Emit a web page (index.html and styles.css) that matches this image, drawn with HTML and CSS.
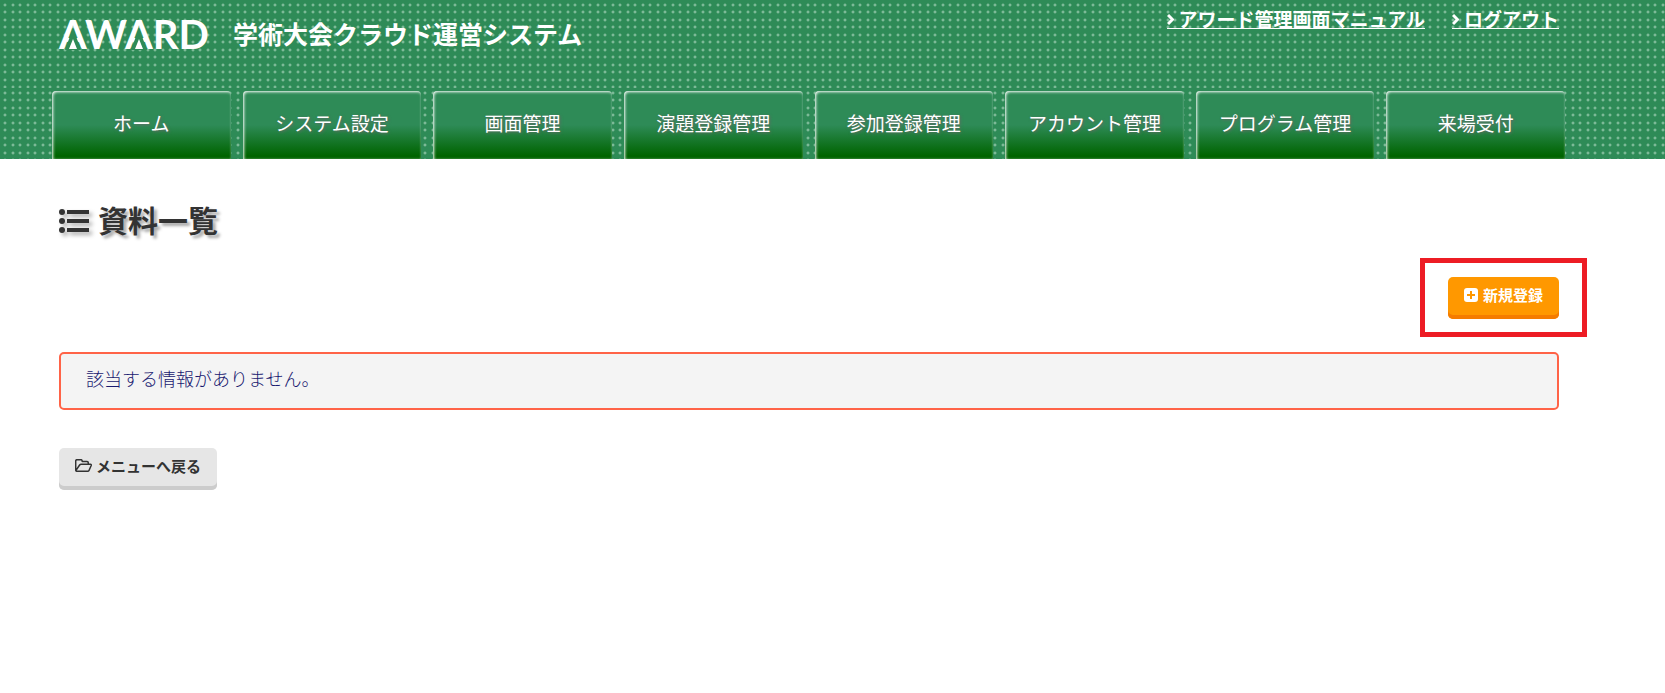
FILE: index.html
```html
<!DOCTYPE html>
<html lang="ja">
<head>
  <meta charset="UTF-8">
  <meta name="viewport" content="width=device-width, initial-scale=1.0">
  <title>資料一覧</title>
  <link rel="stylesheet" href="styles.css">
</head>
<body>
  <header class="header">
    <div class="header-inner">
      <a class="brand" href="#">
        <svg class="logo" width="156" height="40" viewBox="0 0 156 40" role="img" aria-label="AWARD">
          <text class="logo-text" x="0" y="36">AWARD</text>
          <path class="logo-gap" d="M14 15 L22 37 H6 Z M80 15 L88 37 H72 Z"/>
          <path class="logo-mark" d="M14 26 L18 36 H10 Z M80 26 L84 36 H76 Z"/>
        </svg>
        <span class="brand-name">学術大会クラウド運営システム</span>
      </a>
      <div class="header-links">
        <a href="#"><svg width="7" height="14" viewBox="0 0 7 14"><path d="M1 3l4.500 4.500L1 12"/></svg>アワード管理画面マニュアル</a>
        <a href="#"><svg width="7" height="14" viewBox="0 0 7 14"><path d="M1 3l4.500 4.500L1 12"/></svg>ログアウト</a>
      </div>
    </div>
  </header>

  <nav class="nav">
    <ul class="nav-list">
      <li><a href="#">ホーム</a></li>
      <li><a href="#">システム設定</a></li>
      <li><a href="#">画面管理</a></li>
      <li><a href="#">演題登録管理</a></li>
      <li><a href="#">参加登録管理</a></li>
      <li><a href="#">アカウント管理</a></li>
      <li><a href="#">プログラム管理</a></li>
      <li><a href="#">来場受付</a></li>
    </ul>
  </nav>

  <main class="main">
    <h1 class="title">
      <svg width="31" height="30" viewBox="0 0 31 30">
        <circle cx="3" cy="8" r="3"/><circle cx="3" cy="17" r="3"/><circle cx="3" cy="26" r="3"/>
        <rect x="8" y="6" width="22" height="4"/><rect x="8" y="15" width="22" height="4"/><rect x="8" y="24" width="22" height="4"/>
      </svg>
      資料一覧
    </h1>

    <div class="actions">
      <div class="marked">
        <button type="button" class="btn btn-new">
          <svg width="15" height="15" viewBox="0 0 15 15">
            <rect y="1" width="14" height="14" rx="3" fill="#fff"/>
            <path d="M7 4v8M3 8h8" stroke="#ff9800" stroke-width="2"/>
          </svg>
          新規登録
        </button>
      </div>
    </div>

    <p class="message">該当する情報がありません。</p>

    <button type="button" class="btn btn-back">
      <svg width="17" height="13" viewBox="0 0 17 13" fill="none" stroke="#333" stroke-width="1.500" stroke-linejoin="round">
        <path d="M13.300 5V3.800Q13.300 2.600 12 2.600H7.200V2Q7.200.7 6 .7H2Q.7.7.7 2V11Q.7 12.300 2 12.300H12.500Q13.300 12.300 14 11.500L16.200 6.500Q16.500 5.200 15.500 5.200H6.200Q5.200 5.200 4.600 6L1 11.300"/>
      </svg>
      メニューへ戻る
    </button>
  </main>
</body>
</html>
```

FILE: styles.css
```css
* {
  box-sizing: border-box;
}
body {
  margin: 0;
  background: #fff;
  color: #333;
  font-family: "Noto Sans CJK JP", sans-serif;
  font-size: 18px;
  line-height: 26px;
}
.header,
.nav {
  background-color: #2e8b57;
  background-image:
    radial-gradient(circle at 5px 5px, #a8d4ba, transparent 2px),
    radial-gradient(circle at 13px 5px, #a8d4ba, transparent 2px),
    radial-gradient(circle at 5px 12px, #a8d4ba, transparent 2px),
    radial-gradient(circle at 13px 12px, #a8d4ba, transparent 2px);
  background-size: 15px 15px;
}
.header-inner {
  display: flex;
  justify-content: space-between;
  align-items: flex-start;
  height: 88px;
  margin: 0 106px 0 59px;
}
.brand {
  display: flex;
  align-items: center;
  gap: 18px;
  padding-top: 11px;
  color: #fff;
  text-decoration: none;
}
.logo {
  overflow: visible;
}
.logo-text {
  font-family: Lato, sans-serif;
  font-size: 40px;
  font-weight: 700;
  fill: #fff;
}
.logo-gap {
  fill: #2e8b57;
}
.logo-mark {
  fill: #fff;
}
.brand-name {
  font-size: 25px;
  font-weight: 700;
  line-height: 44px;
}
.header-links {
  display: flex;
  gap: 27px;
  padding-top: 10px;
}
.header-links a {
  display: flex;
  align-items: center;
  gap: 5px;
  border-bottom: 1px solid #fff;
  color: #fff;
  font-size: 19px;
  font-weight: 700;
  line-height: 18px;
  text-decoration: none;
}
.header-links svg {
  fill: none;
  stroke: #fff;
  stroke-width: 3;
}

.nav {
  padding: 3px 100px 0 52px;
}
.nav-list {
  display: grid;
  grid-template-columns: repeat(8, 1fr);
  gap: 12px;
  margin: 0;
  padding: 0;
  list-style: none;
}
.nav-list a {
  display: block;
  height: 68px;
  border-radius: 4px 4px 0 0;
  background: linear-gradient(#2e8b57 50%, #006400 95%);
  box-shadow: inset 1px 1px 3px #fff;
  color: #fff;
  font-size: 19px;
  line-height: 64px;
  text-align: center;
  text-decoration: none;
  text-shadow: 1px 1px 3px #666;
}

.main {
  padding: 38px 106px 40px 59px;
}
.title {
  display: flex;
  align-items: center;
  gap: 8px;
  margin: 0;
  font-size: 30px;
  line-height: 44px;
  text-shadow: 3px 3px 3px #aaa;
}
.title svg {
  fill: #333;
  filter: drop-shadow(3px 3px 2px #aaa);
}
.actions {
  display: flex;
  justify-content: flex-end;
  margin: 36px 0 33px;
}
.marked {
  position: relative;
}
/* red frame drawn round the button */
.marked::after {
  content: "";
  position: absolute;
  inset: -19px -28px -18px;
  border: 5px solid #ed1c24;
  pointer-events: none;
}
.btn {
  display: flex;
  align-items: center;
  gap: 4px;
  height: 42px;
  padding: 0 16px 7px;
  border: 0;
  border-radius: 5px;
  font-family: inherit;
  font-size: 15px;
  font-weight: 700;
  cursor: pointer;
}
.btn-new {
  background: #ff9800;
  box-shadow: inset 0 -4px 0 #f57c00;
  color: #fff;
}
.btn-back {
  background: #e6e6e6;
  box-shadow: inset 0 -4px 0 #ccc;
  color: #333;
}
.message {
  margin: 0 0 38px;
  padding: 11px 25px 17px;
  border: 2px solid #ff6347;
  border-radius: 5px;
  background: #f4f4f4;
  color: #191970;
  font-weight: 300;
}
```
